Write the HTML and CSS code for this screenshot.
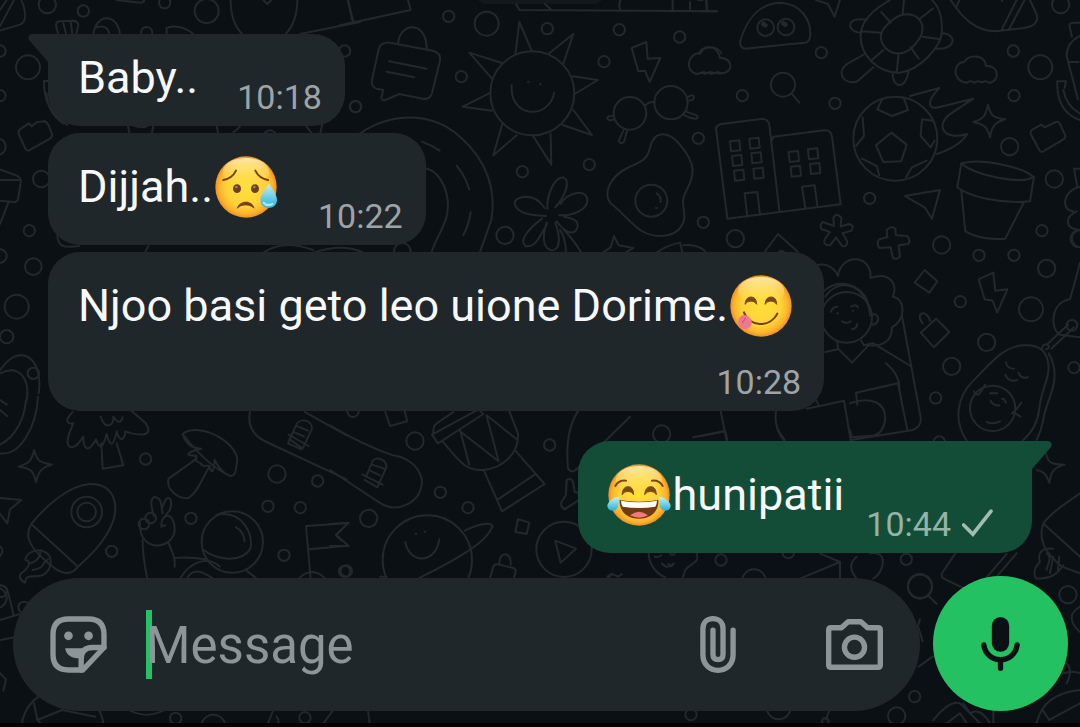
FILE: index.html
```html
<!DOCTYPE html>
<html lang="sw">
<head>
  <meta charset="utf-8">
  <meta name="viewport" content="width=device-width, initial-scale=1">
  <title>Chat</title>
  <link rel="stylesheet" href="styles.css">
</head>
<body>
  <!-- doodle wallpaper -->
  <svg class="wallpaper" viewBox="0 0 1080 727" preserveAspectRatio="xMidYMid slice" aria-hidden="true">
    <rect class="date-pill" x="475" y="-30" width="130" height="34" rx="12"/>
    <g transform="scale(.3333)">
      <circle cx="142" cy="14" r="26"/><circle cx="250" cy="33" r="17"/><circle cx="494" cy="8" r="17"/>
      <circle cx="620" cy="33" r="36"/><circle cx="440" cy="98" r="17"/><circle cx="0" cy="153" r="17"/>
      <circle cx="84" cy="202" r="36"/><circle cx="0" cy="287" r="17"/><circle cx="1034" cy="153" r="17"/>
      <circle cx="1066" cy="320" r="17"/><circle cx="-8" cy="440" r="25"/><circle cx="124" cy="537" r="25"/>
      <circle cx="88" cy="692" r="17"/><circle cx="0" cy="768" r="20"/><circle cx="100" cy="800" r="25"/>
      <circle cx="50" cy="920" r="36"/><circle cx="20" cy="1010" r="20"/><circle cx="100" cy="1120" r="17"/>
      <path d="M0 78 42 0M64 0q25 62-4 74L0 92M20 0 0 30"/>
      <path d="M168 76q0-12 12-12l40-2q14 0 15 14l-6 26M168 76l6 26M190 70l8 30M212 66l5 36"/>
      <path d="M280 102c8-60 70-66 80 0M290 82q30-10 38 18M500 102V84q40-14 80 18"/>
      <path d="M692 0c0 50 12 80 35 102M892 0c0 50-14 80-35 102M790 0l12 12 12-12M900 102l180-36M1044 0l14 66M350 0l70 8q14 0 12-10"/>
      <path d="M56 402q-2-10 4-14l26-18 9 9 15-12 22-3q10 2 14 12l10 26q2 10-6 14l-60 34q-10 4-14-4z"/>
      <path d="M132 243h18M132 243c0 50 10 90 70 132M140 280q2 60 50 90"/>
      <path d="M384 378l4 20M460 378l-4 20M400 376q30 12 46 0M650 378l4 20M722 376q-10 16-22 20M967 372l-6 28M918 378l16 20M795 398q16-14 30 0"/>
      <path d="M0 508l48 18q16 6 14 22l-8 50q-2 8-10 8L0 602M0 540h56M26 606 0 672"/>
      <path d="M172 702c0 40 20 42 66 36M445 738l-10 20M790 758q60-42 150-8M940 758q90-30 150 0"/>
    </g>
    <g transform="translate(340) scale(.3333)">
      <circle cx="326" cy="49" r="17"/><circle cx="440" cy="71" r="36"/><circle cx="622" cy="86" r="17"/>
      <circle cx="838" cy="89" r="17"/><circle cx="1019" cy="111" r="17"/><circle cx="792" cy="185" r="17"/>
      <circle cx="364" cy="230" r="17"/><circle cx="47" cy="320" r="17"/><circle cx="1075" cy="415" r="17"/>
      <circle cx="748" cy="494" r="17"/><circle cx="547" cy="515" r="17"/><circle cx="495" cy="706" r="26"/>
      <circle cx="1090" cy="667" r="17"/><circle cx="187" cy="754" r="25"/>
      <path d="M0 76 212 30 204 0M24 0l16 66"/>
      <path d="M528 12l10 18 594 4M615 12l20 18M842 0q-8 15 0 32M998 0v32M1050 6v26M1100 0v32M1074 0h14"/>
      <path d="M150 128l128 24q26 6 22 30l-24 98q-6 20-28 16l-70-14-42 18q-10 4-12-8l6-22-20-4q-18-6-14-26l20-92q6-22 34-20zM174 132c4-66 84-72 86 12M147 184l113 22M140 215l83 17"/>
      <circle cx="577" cy="280" r="126"/>
      <path d="M526 164l12-98 38 88M628 160l72-58-30 88M698 229l76 11-70 42M700 330l56 75-88-30M632 402l2 92-56-88M530 406l-70 60 26-92M456 332l-88-12 84-42M456 236l-68-78 100 32"/>
      <path d="M515 256c-6 100 112 104 128 22M564 245h2M600 253h2"/>
      <path d="M875 144l44-18 4 50 38-2-32 72-14-34-20 2z"/>
      <path d="M1074 222c-40-4-34-60 4-62 6-26 60-22 66 0M1074 222q12-8 20 0 12-8 20 0 12-8 26 0"/>
      <circle cx="870" cy="340" r="49"/><circle cx="993" cy="308" r="50"/>
      <path d="M916 316q10-12 28-10M1042 292q20-12 20 0 0 10-20 10M1036 334l34 12q8 10-4 10-24-2-36-14M822 348q-22-2-20 8 4 8 20 2M852 388l-16 34q4 12 16 4l10-36"/>
      <path d="M60 400C150 340 270 330 360 410c80 70 110 160 94 250l-34 96M258 505c52 15 72 85 64 135-7 40-32 70-47 116M245 425q30 10 54 27M350 497q28 35 38 72M392 637q-6 40-22 68"/>
      <path d="M930 444c14-60 60-46 90-10 50 60 44 90 20 136-24 44 0 60-8 90-16 60-100 60-144 20-30-26-50-50-76-70-24-30-2-80 50-106 36-18 58-20 68-60z"/>
      <circle cx="934" cy="602" r="48"/>
      <path d="M950 580q14 8 12 26M948 624h2"/>
      <path d="M622 626c-2-40 20-94 48-94 26 10 0 64-24 90M662 612c20-36 76-46 80-14 4 28-40 50-84 48M672 650c40 6 46 20 38 38-10 20-40 6-60-24M614 624c-30-50-90-36-90-14 6 34 60 36 94 38M606 656c-40 30-70 66-50 82 30 8 44-30 66-68M620 668c-14 44-12 76 16 84 30-6 22-50 10-84M660 690q16 20 18 66M670 688q30 30 54 70"/>
      <path d="M822 708l14 28 44 8-24 14M822 708l-10 34-24 16M950 758q30-22 70-30l8 30M1030 736q40-6 66 18"/>
    </g>
    <g transform="translate(700) scale(.3333)">
      <circle cx="1082" cy="14" r="26"/><circle cx="364" cy="158" r="17"/><circle cx="940" cy="153" r="17"/>
      <circle cx="1021" cy="202" r="36"/><circle cx="127" cy="287" r="17"/><circle cx="405" cy="310" r="17"/>
      <circle cx="942" cy="287" r="17"/><circle cx="929" cy="440" r="26"/><circle cx="1063" cy="537" r="26"/>
      <circle cx="509" cy="595" r="17"/><circle cx="106" cy="716" r="26"/><circle cx="725" cy="735" r="26"/>
      <circle cx="1026" cy="692" r="17"/><circle cx="837" cy="766" r="17"/><circle cx="942" cy="766" r="17"/>
      <path d="M0 34h50M18 0l4 32"/>
      <path d="M120 126c20-70 60-116 120-118 60 2 96 50 90 104q-2 14-16 16l-176 18q-18 0-18-20z"/>
      <circle cx="197" cy="83" r="25"/><circle cx="258" cy="81" r="25"/><path d="M190 72l6 4M250 70l6 4" stroke-width="14"/>
      <path d="M348 0l36 12 20 38 16-50M26 142c-16 2-20 10-26 20M26 142q28 0 34 32c40-2 42 46 4 46q-12-8-22 0-12-8-20 0-12-6-22 0"/>
      <circle cx="249" cy="254" r="36"/><path d="M274 280l24 28"/>
      <path d="M570 0c-50 30-86 60-88 106-2 60 50 112 116 112 60-6 130-80 128-130 0-40-10-70-30-88M566 70c40-40 80-30 96-6 16 30-4 60-32 84-36 24-70 10-84-20-10-22 0-40 20-58M544 36l28 32M612 0l-4 44M698 26l-40 32M722 118l-54-8M656 176l-24-34M590 218l6-58M516 180l34-30M484 94l58 4M500 60c-60-14-66 36-16 38M726 100c46 0 44 52-20 46M494 162l-56 32c-30 26-4 62 34 50l48-42M578 218c0 50 40 50 48-4"/>
      <path d="M752 0c36 56 76 94 136 94l84-10q48-8 38-40L990 0M904 92 950 0M926 90 974 0M770 20l8-20M906 0v4"/>
      <path d="M800 248c-44-4-42-60-8-62 16-24 62-24 66 12 40-4 44 48 8 50q-12-8-20 0-12-8-22 0-12-8-24 0z"/>
      <circle cx="586" cy="416" r="126"/>
      <path d="M574 398l46 36-16 50-54 2-22-50zM546 298l-14 30 44 20 48-18-12-34M698 362l-32-4-4 50 30 34 12-20M488 352l4 56-24 30M486 476l44 22 8 28M680 482l-44 20-18 30M630 288l88-24c-40 40-34 66-2 58l104-26-72 48c-40 30-20 80 54 58-20 30-60 50-92 60"/>
      <path d="M864 314c8 34 16 40 52 44-32 10-40 20-46 54-8-34-18-38-50-46 30-8 38-20 44-52z"/>
      <path d="M992 402q-2-8 6-14l26-14 10 8 34-16q8-2 12 6l16 34q2 8-6 12l-60 36q-8 4-12-4z"/>
      <path d="M48 392q-2-16 16-20l120-15q20-2 24 18l30 257M216 422l4-12 152-19q20-2 24 18l26 204L82 656 48 386M134 580l38-4 8 68M134 580l8 70M306 560l38-4 8 62M306 560l10 64"/>
      <path d="M90 424l28-3 3 30-28 3zM148 416l28-3 3 30-28 3zM96 468l28-3 3 30-28 3zM154 460l28-3 3 30-28 3zM102 512l28-3 3 30-28 3zM160 506l28-3 3 30-28 3zM266 456l28-3 3 30-28 3zM324 448l28-3 3 30-28 3zM272 500l28-3 3 30-28 3zM330 492l28-3 3 30-28 3z"/>
      <path d="M784 490c60-16 180 10 216 40-30 26-180-4-216-40zM784 490l-12 72c40 30 130 50 218 42l12-74M784 572l12 122q50 28 120 22l56-110"/>
      <path d="M614 588l106-18-24 86-22-34z"/>
      <path d="M402 678l-2-24q10-20 24 0l-2 26 24-8q20 4 8 20l-26 8 14 24q0 18-16 14l-18-26-18 24q-22 0-16-18l16-22-24-8q-10-12 2-22z"/>
      <path d="M562 712l-2-22q14-14 26-4l2 20 34 2q12 14 2 24l-28 4 4 34q-14 12-22 2l-6-30-34 2q-10-16 0-26z"/>
      <path d="M194 756l40-54 60 54M236 756q8-8 16 0"/>
      <path d="M1110 84q-6-14 10-16h20M1110 84l6 26M1140 108q-40 20-40 60l34 130M1106 186h30M1072 244h26l-4 20M1072 244c-2 60 20 100 68 116M1090 270q10 50 50 70M1122 506h18M1122 506l10 54M1140 560c-50 10-60 70-20 74M1130 634c-40 20-30 50 0 54M1140 690c-30 0-40 40-10 52"/>
    </g>
    <g transform="translate(700 240) scale(.3333)">
      <circle cx="1040" cy="85" r="26"/><circle cx="781" cy="185" r="17"/><circle cx="993" cy="208" r="36"/>
      <circle cx="860" cy="307" r="26"/><circle cx="755" cy="379" r="26"/><circle cx="707" cy="474" r="17"/>
      <circle cx="1122" cy="383" r="17"/><circle cx="718" cy="606" r="17"/>
      <path d="M340 80c30-14 60-4 74 28 8-66 100-70 98 6 60-22 84 24 66 56 40 6 40 70-2 92 0 50-40 60-74 52M376 170c40-60 120-40 134 50M366 158c50-50 120-24 138 30"/>
      <circle cx="440" cy="232" r="76"/><path d="M510 226c30-16 34 30 4 28"/>
      <path d="M392 216q6-16 20-16M454 200q14-10 20 2M412 220h2M458 212h2M426 244q12 8 26 0M456 268q14-2 16-16"/>
      <path d="M376 336l38-8-2-24M484 302l8 14 28-6 112 68M414 326l42 42 50-52M606 228l56 304q4 28-24 38l-184 30M558 370q44 36 40 80M344 474l12 20M320 506l112-24 20 118M472 494l-4-36 126-28 28 140M450 490c60-20 106-6 106 46-4 30-14 44-30 48M228 514c-6 40 10 70 24 88M62 514l18 88M0 588l72-14"/>
      <path d="M674 90l38 34-24 34-44-30zM708 236l40 40-46 46-40-44zM668 250c-26-34 14-42 22-8"/>
      <path d="M836 118l44-20 6 54 36-4-30 70-14-36-24-4z"/>
      <path d="M800 602c-40-60-30-130 20-180 50-50 90-104 150-106 50-4 76 20 76 70-2 40-24 70-28 120-4 40-20 70-50 96M1046 340c46 80-10 140-16 200-4 20-10 40-20 60"/>
      <circle cx="878" cy="505" r="68"/>
      <path d="M822 454q4 14 16 8l18-28M936 520q12-8 28-32M940 516l22 14M918 366q2 20 24 20M956 398q6 20 28 14M916 404q10 24 36 16M870 460h22M872 482q6 16 26 14M906 476q8 0 12 12M860 546q20 8 40-2"/>
      <path d="M1110 178q20-70 30-110M1110 178c-60 10-60 90-30 106l60 8M1026 326q2-16 16-12 12 8-4 14M1040 314l64-60M1054 326l68-64"/><circle cx="1116" cy="256" r="16"/>
      <circle cx="1142" cy="-4" r="26"/>
    </g>
    <g transform="translate(0 400) scale(.3333)">
      <circle cx="437" cy="177" r="17"/><circle cx="831" cy="222" r="26"/><circle cx="953" cy="243" r="17"/>
      <circle cx="804" cy="319" r="17"/><circle cx="901" cy="323" r="17"/><circle cx="573" cy="355" r="17"/>
      <circle cx="335" cy="454" r="17"/><circle cx="852" cy="466" r="17"/><circle cx="4" cy="574" r="17"/>
      <path d="M78 0C74 50 50 110 0 134M114-10C110 80 60 170-2 160M0 0l20 14M0 30l22 18M116-20c14-90-40-150-100-90L0-90M80 0C90-60 60-110 0-80"/>
      <path d="M218 36c-20 20-24 36 2 34-18 40-26 70-4 72 16-2 22-16 34-32 0 40 16 50 38 8 10 30 20 30 32-16 10 40 20 40 30-8 10 40 26 20 26 0 60 20 84 8 60-26l-42-36M302 50q10 30 24 26 16-2 14-26 20 30 28 2M304 130l4 76 62-10-20-66"/>
      <path d="M102 150c10 34 18 38 54 44-34 10-40 20-48 52-8-34-16-42-52-46 32-10 40-20 46-50z"/>
      <path d="M0 294l64 6-34 28-8 42L0 342M0 440q16 10-4 34"/>
      <path d="M548 102c50-40 180 30 162 92-2 24-8 36-18 34-50-20-100-70-144-126zM548 102c10 34 30 42 56 44M604 146c-20 4-50 14-34 20l20 2c-14 20 20 20 14 26 14 10 20-2 24 6 10 30 14 4 16-20M644 180q20 40 48 48M590 176l-84 60c-10 30 30 64 60 58 30-20 40-60 64-96"/>
      <path d="M94 372c40-50 110-116 176-120 70-2 90 60 66 120-20 50-60 90-102 128-30 40-70 8-100-20-50-44-60-76-40-108zM98 376l136 124"/>
      <circle cx="260" cy="336" r="46"/><circle cx="260" cy="336" r="28"/>
      <path d="M150 470c-20-30-70-20-74 10 20 4 10 20-4 34-20 10-14 26 4 34 0-30 30-14 50-22 20-10 30-30 24-56M92 490q30-10 30-40M98 510c40-6 24-20 46-32"/>
      <path d="M420 370c-4 90 100 80 104 20 2-50-40-60-40-10l12-4M462 348c-20-60 4-68 20-44l6 36M488 320c10-40 34-32 22 10l-16 20M428 420c0 50 6 80 14 116M506 430c12 30 20 40 18 70M526 474q40-4 90 4M540 536c30-50 80-70 120-36M560 536q20-36 60-12l20 12M740 512l30 24"/>
      <circle cx="432" cy="372" r="16"/><circle cx="452" cy="354" r="16"/>
      <circle cx="697" cy="426" r="92"/><path d="M650 344c80-14 110 60 102 100-24 44-100 40-144 4M708 382q24 12 26 42"/>
      <path d="M750 36c-10 50 20 76 50 90l240 112M914 36l126 70M870 118l38 28 28-60c0-30-40-32-48-10l-20 44M882 96l30 14M890 78l34 14M866 104l60 34M870 118l-6 12 40 18"/>
      <path d="M932 536l-14-158 122-8M926 448l110-10M896 536q40-40 80 0M1024 390l-16 16 16 16"/>
    </g>
    <g transform="translate(330 400) scale(.3333)">
      <circle cx="69" cy="34" r="17"/><circle cx="255" cy="123" r="26"/><circle cx="331" cy="277" r="17"/>
      <circle cx="414" cy="323" r="17"/><circle cx="116" cy="355" r="26"/><circle cx="49" cy="513" r="17"/>
      <circle cx="659" cy="135" r="17"/>
      <path d="M166 36l14 42 52-14-8-30M310 100q-2-20 10-30l50-34M306 104l140-76 14 14-136 88zM338 124c50 60 70 90 120 86 60-4 110-50 106-110l-26-66M390 90l28 104M390 94l116 90-36-136M470 46l88 70M462 212l54 122 128-82-88-100M504 298l110-74"/>
      <path d="M0 76q100 60 190 90c60 10 84 50 86 80-4 60-70 96-124 64L0 210M104 240l38 22 28-62c-6-30-38-30-44-12l-18 42M120 212l30 14M126 194l36 12M98 224l60 30"/>
      <path d="M0 372l56-4-38 36 38 34H0"/>
      <circle cx="292" cy="480" r="134"/><path d="M226 426c10 64 90 70 102-8M257 401h2M284 395h2M404 392c60-30 94-24 80-6-20 44-100 90-220 150M150 530h20"/>
      <path d="M564 358l34 10-8 34-34-6zM480 534l10-34q4-10 18-6l42 10q10 4 6 14l-4 16M508 494c-2-44 38-40 34 0"/>
      <circle cx="702" cy="448" r="83"/><path d="M676 422l62 24-46 42z"/>
      <path d="M744 34q-40 60-30 170 10 20 30 0L900 50M710 240q16-10 20 10l4 26 30 6-20 20-40 26q-16-10-8-24l12-20z"/>
    </g>
    <g transform="translate(570 430) scale(.3333)">
      <circle cx="275" cy="12" r="26"/><circle cx="453" cy="390" r="17"/><circle cx="655" cy="368" r="17"/>
      <circle cx="1009" cy="388" r="17"/><circle cx="1050" cy="468" r="36"/><circle cx="552" cy="454" r="36"/>
      <path d="M370 22l96-18 6 26M624 0l20 30M840 0l6 22 80-6"/>
      <path d="M236 370c0 30 20 60 50 72M380 370c10 30-20 30-34 50l-8 24M254 380q10 4 20-4M300 372q10 6 16-4M276 400q14 20 36 0M296 402q6 14 14 0M112 440l14-8 18 8 12-8M124 432l-6 10M690 446l120-50M750 370l60 26v50M900 370c60-10 40 60 10 76M860 380c-24 20-20 40 0 66M1156 370l-40 60q-4 14 10 18l50 24M1340 370l-60 70M1310 372l-60 70"/>
      <path d="M1428 70c6 30 18 34 56 34-34 10-40 20-46 54-10-28-20-34-38-38"/>
      <path d="M1420 280c30-40 70-60 110-90M1420 280c-20 60 20 100 56 130l54 20M1424 284l106 96M1450 356c-30-4-50 10-40 40-20 20-20 40-10 50 40 0 60-10 80-40M1430 370c20 10 0 40 0 50M1450 380l-10 50M1468 380l-4 40"/>
    </g>
    <g transform="translate(0 570) scale(.3333)">
      <circle cx="527" cy="445" r="17"/><circle cx="915" cy="443" r="17"/><circle cx="640" cy="470" r="36"/>
      <circle cx="-10" cy="84" r="30"/><circle cx="72" cy="112" r="17"/><circle cx="1034" cy="4" r="17"/>
      <path d="M0 46q20 0 24 20l16 66M0 150l60-18M0 210l44-8M0 310l18 18-8 34"/>
      <circle cx="188" cy="480" r="124"/><path d="M112 450l74-30 24-30M112 450l-10-50M112 450l20 20M186 420l100 20"/>
      <path d="M390 422q50 24 100 0M820 420l-20 50M830 440q10 14 4 30M1000 420l-30 40M1104 420l6 50"/>
    </g>
    <g transform="translate(680 570) scale(.3333)">
      <circle cx="33" cy="434" r="17"/><circle cx="296" cy="412" r="36"/><circle cx="704" cy="380" r="17"/>
      <circle cx="650" cy="438" r="26"/><circle cx="720" cy="50" r="36"/><circle cx="1164" cy="74" r="26"/>
      <path d="M744 76l26 26M720 148l-6 20 14 46M716 290l42-30M760 450q50-60 80-50l60 60M800 460l40-30 20 30M850 400l20 30q30-20 60 30M940 420v44M1200 110q-50 30 0 76M1160 280q20 20 0 60M1150 310q30-10 50 0M1070 460q20-90 130-100M1108 450l92-50M1108 450l-20-30M438 448l10-28"/>
      <circle cx="436" cy="454" r="10"/>
    </g>
  </svg>

  <!-- shared emoji face -->
  <svg class="defs" width="0" height="0" aria-hidden="true">
    <defs>
      <radialGradient id="face" cx=".5" cy=".5" r=".5">
        <stop offset="0" stop-color="#ffe03a"/>
        <stop offset=".65" stop-color="#ffd23a"/>
        <stop offset=".88" stop-color="#fbb32c"/>
        <stop offset="1" stop-color="#ee8f22"/>
      </radialGradient>
      <linearGradient id="shine" x1="0" y1="0" x2="0" y2="1">
        <stop offset="0" stop-color="#fff3c0" stop-opacity=".85"/>
        <stop offset="1" stop-color="#ffe45a" stop-opacity="0"/>
      </linearGradient>
      <linearGradient id="tear" x1="0" y1="0" x2="0" y2="1">
        <stop offset="0" stop-color="#c8f1f7"/>
        <stop offset="1" stop-color="#2ab0d8"/>
      </linearGradient>
      <g id="ball">
        <circle cx="93" cy="93" r="92" fill="url(#face)"/>
        <ellipse cx="93" cy="48" rx="70" ry="42" fill="url(#shine)"/>
      </g>
    </defs>
  </svg>

  <main class="messages">
    <div class="bubble bubble-first">
      <p class="text">Baby..</p>
      <time class="time">10:18</time>
    </div>
    <div class="bubble">
      <p class="text">Dijjah..<svg class="emoji" viewBox="0 0 186 186" role="img" aria-label="😥">
        <use href="#ball"/>
        <path d="M25 72q26-4 38-28M121 44q12 24 38 28" fill="none" stroke="#76430f" stroke-width="6" stroke-linecap="round"/>
        <ellipse cx="66" cy="98" rx="12" ry="13" fill="#6b3f1c"/>
        <ellipse cx="120" cy="98" rx="12" ry="13" fill="#6b3f1c"/>
        <circle cx="64" cy="93" r="4" fill="#a9805a"/>
        <circle cx="118" cy="93" r="4" fill="#a9805a"/>
        <path d="M65 158c8-28 48-28 54 0q-27-20-54 0z" fill="#7a4211"/>
        <path d="M162 82c10 20 24 34 24 50 0 32-50 32-50 0 0-16 16-30 26-50z" fill="url(#tear)"/>
        <path d="M146 140q10 12 26 4" fill="none" stroke="#a5ecf4" stroke-width="7" stroke-linecap="round"/>
      </svg></p>
      <time class="time">10:22</time>
    </div>
    <div class="bubble bubble-long">
      <p class="text">Njoo basi geto leo uione Dorime.<svg class="emoji" viewBox="0 0 186 186" role="img" aria-label="😋">
        <use href="#ball"/>
        <path d="M45 88q2-22 18-22t17 22q-6-10-17-10t-18 10zM105 88q2-22 18-22t17 22q-6-10-17-10t-18 10z" fill="#7a4a12" stroke="#7a4a12" stroke-width="3" stroke-linejoin="round"/>
        <path d="M42 112c14 44 78 48 100 4" fill="none" stroke="#70430f" stroke-width="6" stroke-linecap="round"/>
        <path d="M42 120c-22 2-24 38 0 42 18 2 26-12 22-28q-10-14-22-14z" fill="#f0788e"/>
        <path d="M46 130q-4 8-8 12" fill="none" stroke="#d95673" stroke-width="4" stroke-linecap="round"/>
      </svg></p>
      <time class="time">10:28</time>
    </div>
    <div class="bubble bubble-sent">
      <p class="text"><svg class="emoji" viewBox="0 0 186 186" role="img" aria-label="😂">
        <use href="#ball"/>
        <path d="M22 66q10-18 32-16M132 50q22-2 32 16" fill="none" stroke="#7a4612" stroke-width="6" stroke-linecap="round"/>
        <path d="M42 92q2-24 18-24t17 24q-6-10-17-10t-18 10zM110 92q2-24 18-24t17 24q-6-10-17-10t-18 10z" fill="#7a4a12" stroke="#7a4a12" stroke-width="3" stroke-linejoin="round"/>
        <path d="M35 108q58 10 116 0c2 32-20 56-58 56s-60-24-58-56z" fill="#713a12"/>
        <path d="M39 110q54 10 108 0 0 10-5 18-49 8-98 0-5-8-5-18z" fill="#fffdf8"/>
        <path d="M66 154q27-22 54 0-26 14-54 0z" fill="#f07a7c"/>
        <path d="M32 98C20 98-2 112-2 126c2 18 26 18 32 2 4-12 2-20 2-30zM154 98c12 0 34 14 34 28-2 18-26 18-32 2-4-12-2-20-2-30z" fill="url(#tear)"/>
      </svg>hunipatii</p>
      <time class="time">10:44</time>
      <svg class="check" viewBox="0 0 94 84" role="img" aria-label="Sent">
        <path d="M5 48l28 28L88 6"/>
      </svg>
    </div>
  </main>

  <footer class="composer">
    <form class="field">
      <button type="button" class="icon-btn" aria-label="Stickers">
        <svg class="icon icon-sticker" viewBox="0 0 170 170">
          <path d="M55 9h60q46 0 46 46v39l-63 67H55q-46 0-46-46V55q0-46 46-46z"/>
          <path d="M161 94h-34q-34 0-34 34v33"/>
          <path class="solid" d="M45 96h66q-18 8-18 30-42 2-48-30z"/>
          <circle class="solid" cx="55" cy="59" r="13"/>
          <circle class="solid" cx="115" cy="59" r="13"/>
        </svg>
      </button>
      <input class="input" type="text" placeholder="Message" aria-label="Message">
      <button type="button" class="icon-btn" aria-label="Attach">
        <svg class="icon icon-clip" viewBox="0 0 106 170">
          <path d="M98 42v73c0 30-20 47-45 47S8 145 8 115V38C8 20 20 8 38 8s30 12 30 30v76c0 11-6 16-15 16s-15-5-15-16V42"/>
        </svg>
      </button>
      <button type="button" class="icon-btn" aria-label="Camera">
        <svg class="icon icon-camera" viewBox="0 0 170 152">
          <path d="M15 26h31L66 8h38l20 18h31q7 0 7 7v104q0 7-7 7H15q-7 0-7-7V33q0-7 7-7z"/>
          <circle cx="85" cy="84" r="30"/>
        </svg>
      </button>
    </form>
    <button type="button" class="mic" aria-label="Voice message">
      <svg class="icon icon-mic" viewBox="0 0 116 162">
        <rect class="solid" x="32" y="0" width="52" height="104" rx="26"/>
        <path d="M8 84c4 28 26 44 50 44s46-16 50-44M58 128v26"/>
      </svg>
    </button>
  </footer>
  <div class="navbar"></div>
</body>
</html>
```

FILE: styles.css
```css
* {
  box-sizing: border-box;
}
body {
  margin: 0;
  min-height: 100vh;
  display: grid;
  grid-template-columns: minmax(0, 1fr);
  grid-template-rows: 1fr auto auto;
  background-color: #0b1014;
  font-family: Roboto, sans-serif;
}

/* wallpaper shares the grid with the chat and sits under it */
.wallpaper {
  grid-area: 1 / 1 / 4 / 2;
  width: 100%;
  height: 100%;
  min-height: 0;
  fill: none;
  stroke: #22282c;
  stroke-width: 6;
  stroke-linecap: round;
  stroke-linejoin: round;
}
.date-pill {
  fill: #12181c;
  stroke: none;
}
.defs {
  position: absolute;
}

.messages {
  grid-area: 1 / 1;
  z-index: 1;
  display: flex;
  flex-direction: column;
  align-items: flex-start;
  gap: 7px;
  padding: 34px 48px 23px;
}
.bubble {
  position: relative;
  display: flex;
  align-items: flex-end;
  max-width: 100%;
  padding: 18px 23px 9px 30px;
  border-radius: 32px;
  background-color: #20272b;
  color: #f7f8fa;
}
.text {
  display: flex;
  align-items: center;
  margin: 0;
  padding-bottom: 13px;
  padding-right: 39px;
  font-size: 45px;
  line-height: 52px;
}
.emoji {
  flex: none;
  width: 62px;
  height: 62px;
  margin: 5px 2px;
  overflow: visible;
}
.time {
  color: #9fa3a5;
  font-size: 34px;
  line-height: 40px;
}
.bubble-first {
  border-top-left-radius: 0;
}
.bubble-first::before,
.bubble-sent::after {
  content: "";
  position: absolute;
  top: 0;
  width: 20px;
  height: 28px;
  background-color: inherit;
}
.bubble-first::before {
  right: 100%;
  clip-path: path("M20 0H4Q-1 1 1 6L20 28Z");
}
.bubble-sent::after {
  left: 100%;
  clip-path: path("M0 0H16Q21 1 19 6L0 28Z");
}
.bubble-long {
  flex-direction: column;
}
.bubble-long .text {
  padding-right: 7px;
}
.bubble-long .time {
  margin-top: 7px;
}
.bubble-sent {
  align-self: flex-end;
  margin-top: 23px;
  padding-right: 39px;
  border-top-right-radius: 0;
  background-color: #144d37;
}
.bubble-sent .text {
  padding-right: 22px;
}
.bubble-sent .emoji {
  margin: 5px 3px 5px 0;
}
.bubble-sent .time {
  color: #94b4a6;
}
.check {
  width: 31px;
  height: 28px;
  margin: 0 0 7px 11px;
  fill: none;
  stroke: #a1bdb1;
  stroke-width: 11;
  stroke-linecap: round;
}

.composer {
  grid-area: 2 / 1;
  z-index: 1;
  display: flex;
  align-items: flex-end;
  gap: 13px;
  padding: 0 12px 12px 13px;
}
.field {
  flex: 1;
  min-width: 0;
  display: flex;
  align-items: center;
  height: 133px;
  padding: 0 37px;
  border-radius: 67px;
  background-color: #20272b;
}
.icon-btn {
  flex: none;
  display: flex;
  padding: 0;
  border: none;
  background: none;
  color: #8d9599;
  cursor: pointer;
}
.icon {
  fill: none;
  stroke: currentColor;
  stroke-width: 16;
  stroke-linecap: round;
  stroke-linejoin: round;
}
.solid {
  fill: currentColor;
  stroke: none;
}
.icon-sticker {
  width: 57px;
  height: 57px;
}
.icon-clip {
  width: 36px;
  height: 57px;
}
.icon-camera {
  width: 57px;
  height: 51px;
  margin-left: 90px;
}
.icon-mic {
  width: 39px;
  height: 54px;
}
.input {
  flex: 1;
  min-width: 0;
  height: 69px;
  margin-left: 39px;
  padding: 2px 0 0;
  border: none;
  outline: none;
  background: linear-gradient(#24c165, #24c165) no-repeat left / 6px 100%;
  color: #f7f8fa;
  font-family: inherit;
  font-size: 51px;
}
.input::placeholder {
  color: #8d9599;
  opacity: 1;
}
.mic {
  flex: none;
  display: flex;
  align-items: center;
  justify-content: center;
  width: 135px;
  height: 135px;
  padding: 0;
  border: none;
  border-radius: 50%;
  background-color: #24c162;
  color: #0b1014;
  cursor: pointer;
}

.navbar {
  grid-area: 3 / 1;
  z-index: 1;
  height: 4px;
  background-color: #000;
}
```
